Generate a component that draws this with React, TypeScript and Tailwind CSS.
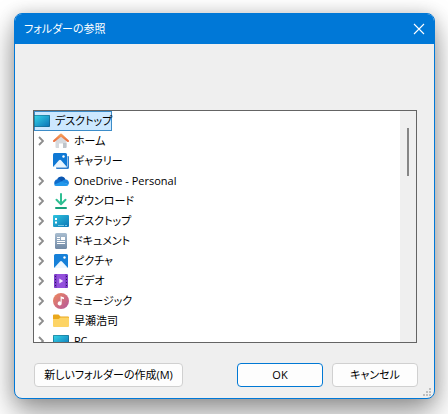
import { useState } from 'react';
import type { ReactNode } from 'react';

interface FolderNode {
  name: string;
  icon: ReactNode;
  expandable: boolean;
}

function ScreenIcon() {
  return (
    <svg width="16" height="16" viewBox="0 0 16 16" aria-hidden="true">
      <defs>
        <linearGradient id="screen" x1="0" y1="0" x2="1" y2="1">
          <stop offset="0" stopColor="#35d3e6" />
          <stop offset="1" stopColor="#0b74b8" />
        </linearGradient>
      </defs>
      <rect x="0" y="2" width="16" height="12" rx="1" fill="#15607f" />
      <rect x="0.6" y="2.6" width="14.8" height="10.8" rx="0.6" fill="url(#screen)" />
    </svg>
  );
}

function HomeIcon() {
  return (
    <svg width="16" height="16" viewBox="0 0 16 16" aria-hidden="true">
      <defs>
        <linearGradient id="roof" x1="0" y1="0" x2="0" y2="1">
          <stop offset="0" stopColor="#f9a55c" />
          <stop offset="1" stopColor="#e8673a" />
        </linearGradient>
      </defs>
      <path d="M2.500 7.500 8 3l5.500 4.500V14a1 1 0 0 1-1 1H10v-4.500H6V15H3.500a1 1 0 0 1-1-1z" fill="#d6d9dd" />
      <path d="M10 10h3.500v4a1 1 0 0 1-1 1H10z" fill="#bfc4ca" />
      <path d="M7.300.8a1.100 1.100 0 0 1 1.400 0l7 6.500c.8.8-.2 2.300-1.400 1.500L8 3.700 1.700 8.800C.5 9.600-.5 8.100.3 7.300z" fill="url(#roof)" />
    </svg>
  );
}

function GalleryIcon() {
  return (
    <svg width="16" height="16" viewBox="0 0 16 16" aria-hidden="true">
      <path d="M14.500 3h.500a1 1 0 0 1 1 1v10.500a1.500 1.500 0 0 1-1.500 1.500H4a1 1 0 0 1-1-1v-.500h10a1.500 1.500 0 0 0 1.500-1.500z" fill="#2f7fce" />
      <rect x="0" y="0" width="14" height="14" rx="1.500" fill="#0f78d4" />
      <circle cx="10.500" cy="3.500" r="1.200" fill="#fff" />
      <path d="M.5 13.500 6 7.300a1.300 1.300 0 0 1 2 0l5.500 6.200a1.500 1.500 0 0 1-1 .500h-11a1.500 1.500 0 0 1-1-.500z" fill="#e8f5ff" />
    </svg>
  );
}

function CloudIcon() {
  return (
    <svg width="16" height="16" viewBox="0 0 16 16" aria-hidden="true">
      <path d="M4 6.300A4.600 4.600 0 0 1 12.500 6.600L9 10z" fill="#0a55b0" />
      <path d="M3.400 13A3.500 3.500 0 1 1 6.300 6.600L12 11z" fill="#0f6ccb" />
      <path d="M8 9.500c1.200-2 3-3 4.500-2.900A3.300 3.300 0 0 1 15.600 11.300z" fill="#1c86e0" />
      <path d="M3.400 13a3.400 3.400 0 0 1-2.500-1.200L8.500 8.500l7.200 3A3.200 3.200 0 0 1 12.800 13z" fill="#2298ec" />
    </svg>
  );
}

function DownloadIcon() {
  return (
    <svg width="16" height="16" viewBox="0 0 16 16" aria-hidden="true">
      <path d="M8 1v10M3.500 6.800 8 11.300l4.500-4.500" fill="none" stroke="#2fbf93" strokeWidth="2" strokeLinecap="round" strokeLinejoin="round" />
      <path d="M3 15h10" stroke="#16a07a" strokeWidth="2" strokeLinecap="round" />
    </svg>
  );
}

function DesktopIcon() {
  return (
    <svg width="16" height="16" viewBox="0 0 16 16" aria-hidden="true">
      <defs>
        <linearGradient id="desktop" x1="0" y1="0" x2="1" y2="1">
          <stop offset="0" stopColor="#2fc5df" />
          <stop offset="1" stopColor="#0c75b6" />
        </linearGradient>
      </defs>
      <rect x="0" y="2" width="16" height="12" rx="1" fill="url(#desktop)" />
      <path d="M2 5h2v2H2zM2 8.500h2v2H2z" fill="#fff" />
      <path d="M5 12h6v1H5zM12 12h2v1h-2z" fill="#7cc9e6" />
    </svg>
  );
}

function DocumentIcon() {
  return (
    <svg width="16" height="16" viewBox="0 0 16 16" aria-hidden="true">
      <defs>
        <linearGradient id="document" x1="0" y1="0" x2="0" y2="1">
          <stop offset="0" stopColor="#a9bdd0" />
          <stop offset="1" stopColor="#7189a5" />
        </linearGradient>
      </defs>
      <rect x="2" y="0" width="12" height="16" rx="1.500" fill="url(#document)" />
      <path d="M4 4h3v1H4zM4 6h3v1H4zM4 8h8v1H4zM4 10h8v1H4zM8 4h4v3H8z" fill="#fff" />
    </svg>
  );
}

function PictureIcon() {
  return (
    <svg width="16" height="16" viewBox="0 0 16 16" aria-hidden="true">
      <rect x="1" y="1" width="14" height="14" rx="1.500" fill="#1680d8" />
      <circle cx="11.500" cy="4.500" r="1.200" fill="#fff" />
      <path d="M1.500 14.500 7 8.500a1.400 1.400 0 0 1 2 0l5.500 6a1.500 1.500 0 0 1-1 .500h-11a1.500 1.500 0 0 1-1-.500z" fill="#eef8ff" />
    </svg>
  );
}

function VideoIcon() {
  return (
    <svg width="16" height="16" viewBox="0 0 16 16" aria-hidden="true">
      <rect x="1" y="1" width="14" height="14" rx="1.500" fill="#9450dc" />
      <path d="M1 2.500A1.500 1.500 0 0 1 2.500 1H4v14H2.500A1.500 1.500 0 0 1 1 13.500zM12 1h1.500A1.500 1.500 0 0 1 15 2.500v11a1.500 1.500 0 0 1-1.500 1.500H12z" fill="#7d3fc8" />
      <path d="M2 3h1v1H2zM2 6h1v1H2zM2 9h1v1H2zM2 12h1v1H2zM13 3h1v1h-1zM13 6h1v1h-1zM13 9h1v1h-1zM13 12h1v1h-1z" fill="#35106c" />
      <path d="M6.300 5.500v5L10.300 8z" fill="#f3e8ff" />
    </svg>
  );
}

function MusicIcon() {
  return (
    <svg width="16" height="16" viewBox="0 0 16 16" aria-hidden="true">
      <defs>
        <linearGradient id="music" x1="0" y1="0" x2="1" y2="1">
          <stop offset="0" stopColor="#f08a5c" />
          <stop offset="1" stopColor="#b3559d" />
        </linearGradient>
      </defs>
      <circle cx="8" cy="8" r="8" fill="url(#music)" />
      <path d="M7.600 3.200 11 4.500v1.700L8.700 5.500v5a2 2 0 1 1-1.100-1.800z" fill="#fff" />
    </svg>
  );
}

function FolderIcon() {
  return (
    <svg width="16" height="16" viewBox="0 0 16 16" aria-hidden="true">
      <path d="M0 2.500a1 1 0 0 1 1-1h4.500l2 2H15a1 1 0 0 1 1 1V13H0z" fill="#eaa81c" />
      <path d="M0 6h5.500l2-1.500H15a1 1 0 0 1 1 1V13a1 1 0 0 1-1 1H1a1 1 0 0 1-1-1z" fill="#fdd465" />
    </svg>
  );
}

const folders: FolderNode[] = [
  { name: 'ホーム', icon: <HomeIcon />, expandable: true },
  { name: 'ギャラリー', icon: <GalleryIcon />, expandable: false },
  { name: 'OneDrive - Personal', icon: <CloudIcon />, expandable: true },
  { name: 'ダウンロード', icon: <DownloadIcon />, expandable: true },
  { name: 'デスクトップ', icon: <DesktopIcon />, expandable: true },
  { name: 'ドキュメント', icon: <DocumentIcon />, expandable: true },
  { name: 'ピクチャ', icon: <PictureIcon />, expandable: true },
  { name: 'ビデオ', icon: <VideoIcon />, expandable: true },
  { name: 'ミュージック', icon: <MusicIcon />, expandable: true },
  { name: '早瀬浩司', icon: <FolderIcon />, expandable: true },
  { name: 'PC', icon: <ScreenIcon />, expandable: true },
];

const rootName = 'デスクトップ';

function itemClass(active: boolean) {
  return `flex h-5 items-center gap-[5px] ${active ? 'bg-[#cce8ff] ring-1 ring-[#3c8cc8] ring-inset' : ''}`;
}

function FolderTree() {
  const [selected, setSelected] = useState(-1);

  return (
    <ul role="tree" aria-label="フォルダー" className="min-w-0 flex-1">
      <li role="treeitem" aria-selected={selected === -1} className="flex h-5 items-center">
        <button type="button" className={itemClass(selected === -1)} onClick={() => setSelected(-1)}>
          <ScreenIcon />
          {rootName}
        </button>
      </li>
      {folders.map((folder, index) => (
        <li key={folder.name} role="treeitem" aria-selected={selected === index} className="flex h-5 items-center">
          <span className="flex w-[19px] shrink-0 pl-1">
            {folder.expandable ? (
              <button type="button" aria-label={`${folder.name}を展開`}>
                <svg width="6" height="10" viewBox="0 0 6 10" aria-hidden="true">
                  <path d="m1 1 4 4-4 4" fill="none" stroke="#8c8c8c" strokeWidth="1.800" />
                </svg>
              </button>
            ) : null}
          </span>
          <button type="button" className={itemClass(selected === index)} onClick={() => setSelected(index)}>
            {folder.icon}
            {folder.name}
          </button>
        </li>
      ))}
    </ul>
  );
}

export default function App() {
  return (
    <main className="pt-[13px] pr-[13px] pb-[15px] pl-3.5 font-['Open_Sans','Noto_Sans_CJK_JP',sans-serif] text-[11px] leading-4 text-black [font-feature-settings:'palt']">
      <section
        role="dialog"
        aria-labelledby="dialog-title"
        className="relative overflow-hidden rounded-lg border border-[#0078d7] bg-[#efefef] shadow-[0_14px_30px_rgba(0,0,0,0.4),0_0_16px_rgba(0,0,0,0.15)]"
      >
        <header className="flex h-[30px] items-center justify-between bg-[#0078d7] px-[9px] text-white">
          <h1 id="dialog-title">フォルダーの参照</h1>
          <button type="button" aria-label="閉じる">
            <svg width="12" height="12" viewBox="0 0 12 12" aria-hidden="true">
              <path d="m1 1 10 10M11 1 1 11" stroke="#fff" strokeWidth="1.100" />
            </svg>
          </button>
        </header>

        <div className="pt-[66px] pr-4 pb-[11px] pl-[18px]">
          <div className="mr-px flex h-[233px] overflow-hidden border border-[#646464] bg-white">
            <FolderTree />
            <div className="w-4 shrink-0 bg-[#efefef] pt-[17px]">
              <div className="mx-auto h-12 w-0.5 bg-[#868686]" />
            </div>
          </div>

          <footer className="mt-5 ml-px flex items-center gap-[9px]">
            <button type="button" className="mr-auto h-6 w-[149px] rounded-sm border border-[#d0d0d0] bg-[#fdfdfd]">
              新しいフォルダーの作成(M)
            </button>
            <button type="button" className="h-6 w-[86px] rounded-sm border border-[#0078d4] bg-[#fdfdfd]">
              OK
            </button>
            <button type="button" className="h-6 w-[86px] rounded-sm border border-[#d0d0d0] bg-[#fdfdfd]">
              キャンセル
            </button>
          </footer>
        </div>

        <svg className="absolute right-[3px] bottom-[2px]" width="8" height="8" viewBox="0 0 8 8" aria-hidden="true">
          <path d="M6 0h2v2H6zM3 3h2v2H3zM6 3h2v2H6zM0 6h2v2H0zM3 6h2v2H3zM6 6h2v2H6z" fill="#bfbfbf" />
        </svg>
      </section>
    </main>
  );
}
